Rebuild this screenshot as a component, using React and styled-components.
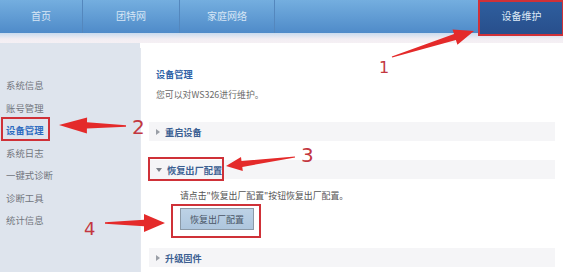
import React from "react";
import styled, { createGlobalStyle } from "styled-components";

const GlobalStyle = createGlobalStyle`
  html, body {
    margin: 0;
    padding: 0;
    background: #ffffff;
  }
  body {
    font-family: "Noto Sans CJK SC", "Liberation Sans", sans-serif;
  }
`;

const Page = styled.div`
  position: relative;
  width: 563px;
  height: 272px;
  overflow: hidden;
  background: #ffffff;
`;

/* Start nav */
const NavBar = styled.ul`
  display: flex;
  align-items: flex-start;
  margin: 0;
  padding: 0;
  list-style: none;
  height: 33px;
  background: linear-gradient(#74aedf, #4f8bc9);
`;
const Tab = styled.li`
  width: ${(props) => props.w}px;
  height: ${(props) => (props.active ? 34 : 33)}px;
  line-height: 31px;
  text-align: center;
  font-size: 10px;
  color: ${(props) => (props.active ? "#dfe9f6" : "#d6e6f5")};
  background: ${(props) =>
    props.active ? "linear-gradient(#2f5f9f, #284f8c)" : "transparent"};
  border-right: ${(props) => (props.sep ? "1px solid #5487bd" : "none")};
  box-sizing: border-box;
  margin-left: ${(props) => (props.active ? "auto" : 0)};
`;
const Strip = styled.div`
  height: 10px;
  background: linear-gradient(#c9dbee, #f2eef3 60%, #f5f0f4);
`;
/* End nav */

const Body = styled.div`
  display: flex;
  height: 229px;
`;

/* Start sidebar */
const Sidebar = styled.ul`
  width: 140px;
  margin: 0;
  padding: 31px 0 0 0;
  list-style: none;
  background: #dee4ed;
`;
const SideItem = styled.li`
  height: 22.5px;
  line-height: 22.5px;
  padding-left: 6px;
  font-size: 9.4px;
  color: ${(props) => (props.active ? "#2d6bc0" : "#72767d")};
  font-weight: ${(props) => (props.active ? 600 : 400)};
`;
/* End sidebar */

/* Start content */
const Content = styled.div`
  flex: 1;
  margin-top: 5px;
  padding: 18px 8px 0 8px;
  background: #ffffff;
  border-left: 1px solid #e3e7ee;
`;
const Title = styled.div`
  padding-left: 7px;
  height: 16px;
  line-height: 16px;
  font-size: 9.2px;
  font-weight: 700;
  color: #2f62a6;
`;
const Desc = styled.div`
  margin-top: 5px;
  padding-left: 7px;
  height: 16px;
  line-height: 16px;
  font-size: 8.9px;
  color: #6a6a6a;
`;
const SectionHead = styled.div`
  display: flex;
  align-items: center;
  gap: 5px;
  margin-top: ${(props) => props.mt}px;
  height: 19px;
  padding-left: 7px;
  background: #f5f5f7;
  font-size: 9.2px;
  font-weight: 700;
  color: #3b5f92;
`;
const Caret = styled.span`
  width: 0;
  height: 0;
  ${(props) =>
    props.open
      ? `border-left: 3px solid transparent;
         border-right: 3px solid transparent;
         border-top: 4px solid #7a7f88;`
      : `border-top: 3px solid transparent;
         border-bottom: 3px solid transparent;
         border-left: 4px solid #9a9ea6;`}
`;
const Hint = styled.div`
  margin-top: 9px;
  padding-left: 31px;
  height: 16px;
  line-height: 16px;
  font-size: 8.9px;
  color: #555;
`;
const Button = styled.button`
  display: block;
  margin: 4px 0 0 31px;
  width: 74px;
  height: 22px;
  padding: 0;
  background: linear-gradient(#bdd2e6, #aec6de);
  border: 1px solid #8c9aa8;
  font-family: inherit;
  font-size: 9px;
  color: #4a5566;
`;
/* End content */

/* Start annotations */
const Overlay = styled.svg`
  position: absolute;
  left: 0;
  top: 0;
  pointer-events: none;
`;
const Num = styled.span`
  position: absolute;
  left: ${(props) => props.x}px;
  top: ${(props) => props.y}px;
  font-family: "DejaVu Sans", sans-serif;
  font-size: ${(props) => props.size}px;
  line-height: 1;
  color: #c3373f;
`;
/* End annotations */

function arrow(x1, y1, x2, y2, headLen, headW, shaftW, tailW) {
  const dx = x2 - x1;
  const dy = y2 - y1;
  const len = Math.hypot(dx, dy);
  const ux = dx / len;
  const uy = dy / len;
  const nx = -uy;
  const ny = ux;
  const bx = x2 - ux * headLen;
  const by = y2 - uy * headLen;
  const pts = [
    [x1 + nx * tailW, y1 + ny * tailW],
    [bx + nx * shaftW, by + ny * shaftW],
    [bx + nx * headW, by + ny * headW],
    [x2, y2],
    [bx - nx * headW, by - ny * headW],
    [bx - nx * shaftW, by - ny * shaftW],
    [x1 - nx * tailW, y1 - ny * tailW],
  ];
  return pts.map((p) => p.map((v) => v.toFixed(1)).join(",")).join(" ");
}

const menu = ["系统信息", "账号管理", "设备管理", "系统日志", "一键式诊断", "诊断工具", "统计信息"];

function App() {
  return (
    <>
      <GlobalStyle />
      <Page>
        <NavBar>
          <Tab w={83} sep>首页</Tab>
          <Tab w={97} sep>团特网</Tab>
          <Tab w={95} sep>家庭网络</Tab>
          <Tab w={83} active>设备维护</Tab>
        </NavBar>
        <Strip />
        <Body>
          <Sidebar>
            {menu.map((m) => (
              <SideItem key={m} active={m === "设备管理"}>
                {m}
              </SideItem>
            ))}
          </Sidebar>
          <Content>
            <Title>设备管理</Title>
            <Desc>您可以对WS326进行维护。</Desc>
            <SectionHead mt={19}>
              <Caret />
              重启设备
            </SectionHead>
            <SectionHead mt={19}>
              <Caret open />
              恢复出厂配置
            </SectionHead>
            <Hint>请点击"恢复出厂配置"按钮恢复出厂配置。</Hint>
            <Button>恢复出厂配置</Button>
            <SectionHead mt={18}>
              <Caret />
              升级固件
            </SectionHead>
          </Content>
        </Body>

        <Overlay width="563" height="272" viewBox="0 0 563 272">
          <g fill="none" stroke="#cf3138" strokeWidth="2">
            <rect x="479" y="1" width="84" height="34" />
            <rect x="2" y="118" width="47" height="22" />
            <rect x="149" y="158" width="74" height="22" />
            <rect x="172" y="205" width="88" height="32" />
          </g>
          <g fill="#e42a2a">
            <polygon points={arrow(392, 57, 474, 31, 20, 8, 3.2, 0.6)} />
            <polygon points={arrow(126, 126, 59, 125, 28, 8, 3.2, 0.7)} />
            <polygon points={arrow(295, 157, 226, 166, 16, 7, 3, 0.6)} />
            <polygon points={arrow(105, 223, 165, 223, 21, 9, 3.2, 0.7)} />
          </g>
        </Overlay>
        <Num x={379} y={60} size={16}>1</Num>
        <Num x={132} y={117} size={20}>2</Num>
        <Num x={301} y={145} size={20}>3</Num>
        <Num x={84} y={220} size={18}>4</Num>
      </Page>
    </>
  );
}

export default App;
